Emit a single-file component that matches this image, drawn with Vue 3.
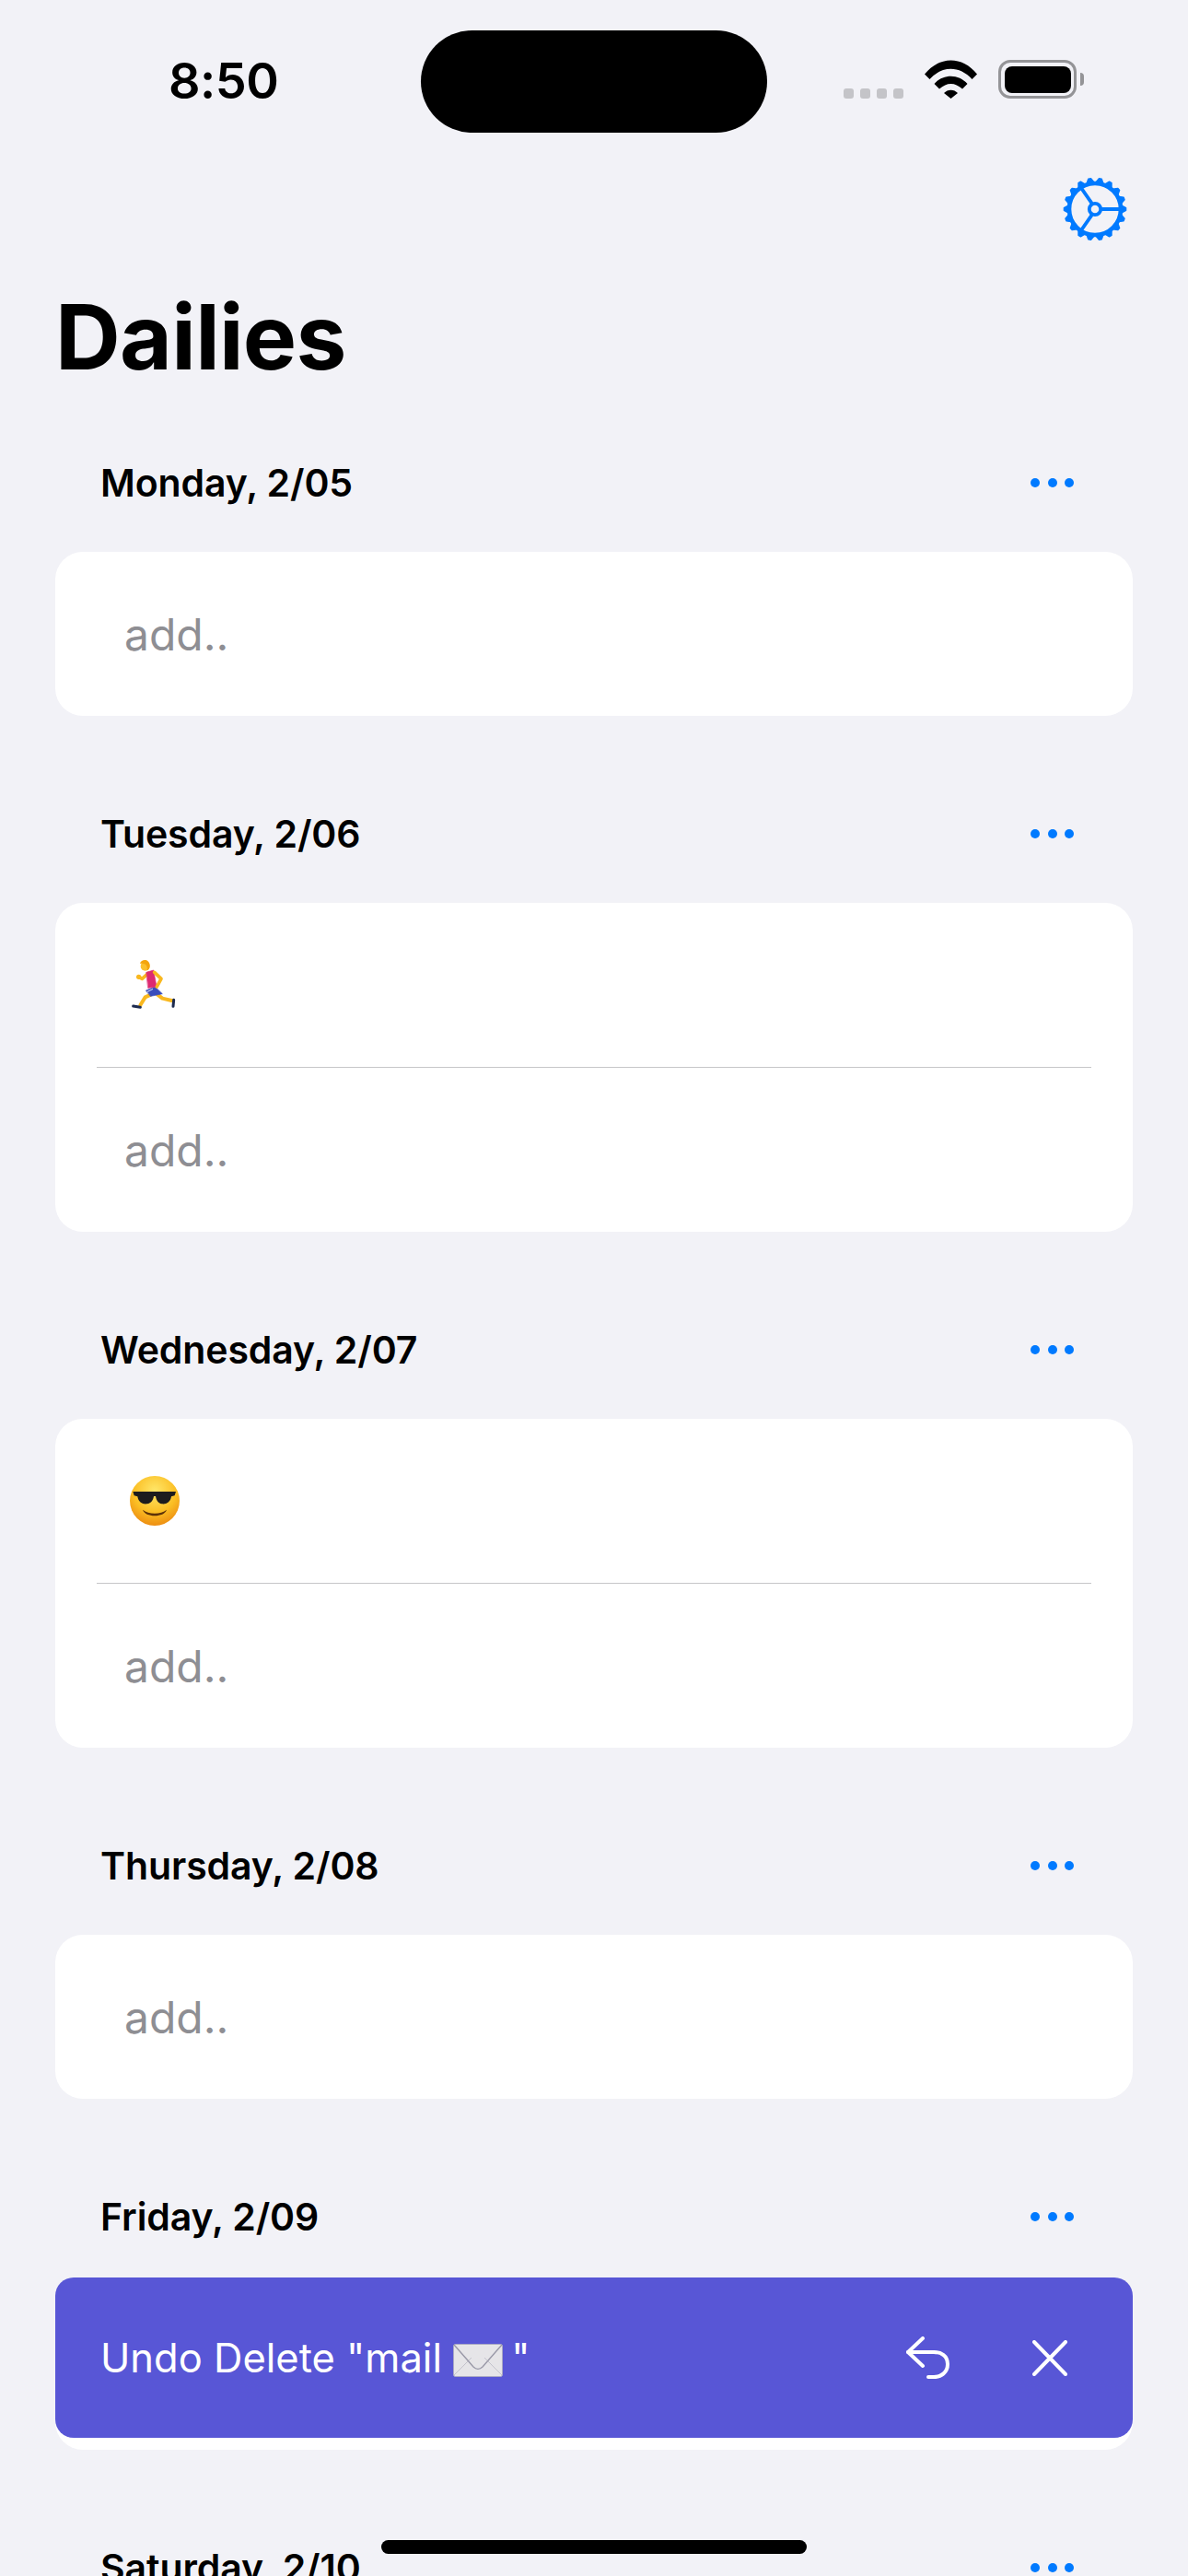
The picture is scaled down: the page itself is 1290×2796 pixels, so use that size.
<script setup>
const days = [
  { label: 'Monday, 2/05', items: [] },
  { label: 'Tuesday, 2/06', items: ['runner'] },
  { label: 'Wednesday, 2/07', items: ['cool'] },
  { label: 'Thursday, 2/08', items: [] },
  { label: 'Friday, 2/09', items: [] },
  { label: 'Saturday, 2/10', items: [] }
];

const teeth = Array.from({ length: 18 }, (_, i) => i * 20);
</script>

<template>
  <div class="phone">
    <div class="status-bar">
      <span class="time">8:50</span>
      <div class="island"></div>
      <div class="status-icons">
        <div class="signal"><i></i><i></i><i></i><i></i></div>
        <svg class="wifi" width="57" height="42" viewBox="0 0 57 42">
          <path d="M0 15.5 C16 -4.5 41 -4.5 57 15.5 L51.5 21 C38 6 19 6 5.5 21 Z" fill="#000" />
          <path d="M10.5 26 C20 15 37 15 46.5 26 L41 31.5 C33 24 24 24 16 31.5 Z" fill="#000" />
          <path d="M21 36 C25 31.5 32 31.5 36 36 L28.5 42 Z" fill="#000" />
        </svg>
        <div class="battery">
          <div class="battery-body"><div class="battery-fill"></div></div>
          <div class="battery-cap"></div>
        </div>
      </div>
    </div>

    <div class="toolbar">
      <svg width="72" height="72" viewBox="-36 -36 72 72" fill="none" stroke="#007aff" stroke-linecap="round">
        <circle r="28" stroke-width="4.6" />
        <circle r="6.2" stroke-width="3.8" />
        <path d="M8 0H27M-3.8 -6.8L-15.7 -24M-3.8 6.8L-15.7 24" stroke-width="3.8" />
        <path v-for="a in teeth" :key="a" d="M29 -4 L33.6 -1.4 V1.4 L29 4 Z" fill="#007aff" stroke-width="1.4" stroke-linejoin="round" :transform="`rotate(${a})`" />
      </svg>
    </div>

    <h1 class="title">Dailies</h1>

    <section v-for="day in days" :key="day.label" class="day">
      <div class="day-header">
        <span class="day-label">{{ day.label }}</span>
        <div class="more"><i></i><i></i><i></i></div>
      </div>
      <div class="card">
        <div v-for="item in day.items" :key="item" class="row">
          <svg v-if="item === 'runner'" class="runner" width="48" height="54" viewBox="128 125 144 162" fill="none" stroke-linecap="round" stroke-linejoin="round">
            <path d="M190 238 L172 246 L156 272" stroke="#f9b81f" stroke-width="12" />
            <path d="M208 234 L228 250 L258 257" stroke="#f9b81f" stroke-width="12" />
            <path d="M133 275 L156 279" stroke="#1d2b4f" stroke-width="9" />
            <path d="M265 255 L263 276" stroke="#1d2b4f" stroke-width="9" />
            <path d="M175 224 L204 212 L228 235 L190 243 Z" fill="#3a4dbb" stroke="#3a4dbb" stroke-width="2" />
            <path d="M180 228 L196 220" stroke="#dfe6ff" stroke-width="3" />
            <path d="M182 168 L162 186 L150 180" stroke="#f9b81f" stroke-width="11" />
            <circle cx="151" cy="180" r="8" fill="#f9b81f" />
            <path d="M176 165 L199 158 L209 212 L182 216 Z" fill="#dd2a70" stroke="#dd2a70" stroke-width="2" />
            <path d="M202 165 L224 186 L210 212" stroke="#f9b81f" stroke-width="11" />
            <circle cx="172" cy="145" r="15" fill="#fbc02d" />
            <path d="M155 136 C160 120 186 121 187 142 C187 152 183 157 178 159 C180 148 176 140 170 138 C164 136 160 137 155 136 Z" fill="#f4a50d" />
          </svg>
          <svg v-else class="cool" width="54" height="54" viewBox="94 96 162 162">
            <defs>
              <radialGradient id="coolFace" cx="50%" cy="30%" r="72%">
                <stop offset="0" stop-color="#ffe76a" />
                <stop offset="0.6" stop-color="#fbbf24" />
                <stop offset="1" stop-color="#ec8a10" />
              </radialGradient>
            </defs>
            <circle cx="175" cy="177" r="81" fill="url(#coolFace)" />
            <path d="M104 147 H244 L240 160 L229 163 C226 182 212 189 198 187 C186 185 180 174 178 162 H172 C170 174 164 185 150 187 C136 189 122 182 119 163 L108 160 Z" fill="#1c1c1e" />
            <path d="M136 206 C155 222 195 222 214 206 C206 232 144 232 136 206 Z" fill="#5d3208" />
          </svg>
        </div>
        <div class="row add">add..</div>
      </div>
    </section>

    <div class="toast">
      <span class="toast-text">Undo Delete "mail <svg class="mail" width="54" height="36" viewBox="0 0 54 36">
          <rect x="0.5" y="0.5" width="53" height="35" rx="2" fill="#e6e5e8" stroke="#a9a8c4" />
          <path d="M1 34 L20 15 M53 34 L34 15" stroke="#c4c3cc" stroke-width="1" fill="none" />
          <path d="M1 1 L22 25 C25 28 29 28 32 25 L53 1" stroke="#9a99a8" stroke-width="1.4" fill="none" />
        </svg><span class="close-quote">"</span></span>
      <div class="toast-actions">
        <svg width="47" height="46" viewBox="0 0 47 46" fill="none" stroke="#fff" stroke-width="4" stroke-linecap="round" stroke-linejoin="round">
          <path d="M18 2 L2 17 L18 32" />
          <path d="M2 17 H30 C38 17 45 21 45 30 C45 39 38 44 30 44 H24" />
        </svg>
        <svg width="38" height="39" viewBox="0 0 38 39" fill="none" stroke="#fff" stroke-width="4" stroke-linecap="round">
          <path d="M2 2 L36 37 M36 2 L2 37" />
        </svg>
      </div>
    </div>

    <div class="home-indicator"></div>
  </div>
</template>

<style>
html, body { margin: 0; background: #f2f2f7; }
</style>

<style scoped>
.phone {
  position: relative;
  width: 1290px;
  height: 2796px;
  overflow: hidden;
  background: #f2f2f7;
  color: #000;
  font-family: Inter, "Liberation Sans", sans-serif;
}

/* status bar */
.status-bar {
  display: flex;
  height: 120px;
  box-sizing: border-box;
  padding-top: 33px;
  align-items: flex-start;
}
.time {
  width: 457px;
  box-sizing: border-box;
  padding: 35px 0 0 183px;
  font-size: 54px;
  line-height: 40px;
  font-weight: 600;
  letter-spacing: -0.5px;
}
.island {
  width: 376px;
  height: 111px;
  border-radius: 56px;
  background: #000;
}
.status-icons {
  display: flex;
  align-items: flex-end;
  margin-top: 32px;
  height: 42px;
  padding-left: 83px;
}
.signal { display: flex; gap: 7px; margin-right: 23px; }
.signal i { width: 11px; height: 11px; border-radius: 3px; background: #c4c4c8; }
.wifi { margin-right: 23px; display: block; }
.battery { display: flex; align-items: center; gap: 4px; }
.battery-body {
  width: 85px;
  height: 42px;
  box-sizing: border-box;
  border: 3.5px solid #949497;
  border-radius: 13px;
  padding: 3.5px;
}
.battery-fill { width: 100%; height: 100%; border-radius: 8px; background: #000; }
.battery-cap { width: 4px; height: 14px; border-radius: 0 4px 4px 0; background: #949497; }

/* nav */
.toolbar {
  display: flex;
  justify-content: flex-end;
  padding: 71px 65px 0 0;
}
.toolbar svg { display: block; }
.title {
  margin: 43px 0 48px 60px;
  font-size: 98px;
  line-height: 120px;
  font-weight: 700;
  letter-spacing: -0.7px;
}

/* days */
.day { margin: 0 60px 78px; }
.day-header {
  display: flex;
  align-items: center;
  justify-content: space-between;
  height: 100px;
  margin-bottom: 25px;
  padding: 0 64px 0 49px;
}
.day-label { font-size: 41px; font-weight: 600; letter-spacing: -0.1px; }
.more { display: flex; gap: 8.5px; }
.more i { width: 10px; height: 10px; border-radius: 50%; background: #007aff; }
.card {
  background: #fff;
  border-radius: 30px;
}
.row {
  display: flex;
  align-items: center;
  height: 178px;
  padding-left: 75px;
  position: relative;
}
.row + .row { margin-top: 1px; }
.row + .row::before {
  content: "";
  position: absolute;
  top: -1px;
  left: 45px;
  right: 45px;
  height: 1px;
  background: #c6c6c8;
}
.add { color: #8e8e93; font-size: 48px; }
.runner { margin-left: 8px; }
.cool { margin-left: 6px; }

/* undo toast */
.toast {
  position: absolute;
  left: 60px;
  top: 2472px;
  width: 1170px;
  height: 174px;
  box-sizing: border-box;
  padding: 0 71px 0 49px;
  display: flex;
  align-items: center;
  justify-content: space-between;
  background: #5856d6;
  border-radius: 20px;
  color: #fff;
}
.toast-text { font-size: 43.5px; white-space: nowrap; }
.mail { vertical-align: -5px; }
.close-quote { margin-left: 9px; }
.toast-actions { display: flex; align-items: center; gap: 90px; }
.toast-actions svg { display: block; }

.home-indicator {
  position: absolute;
  left: 414px;
  top: 2757px;
  width: 462px;
  height: 15px;
  border-radius: 8px;
  background: #000;
}
</style>
